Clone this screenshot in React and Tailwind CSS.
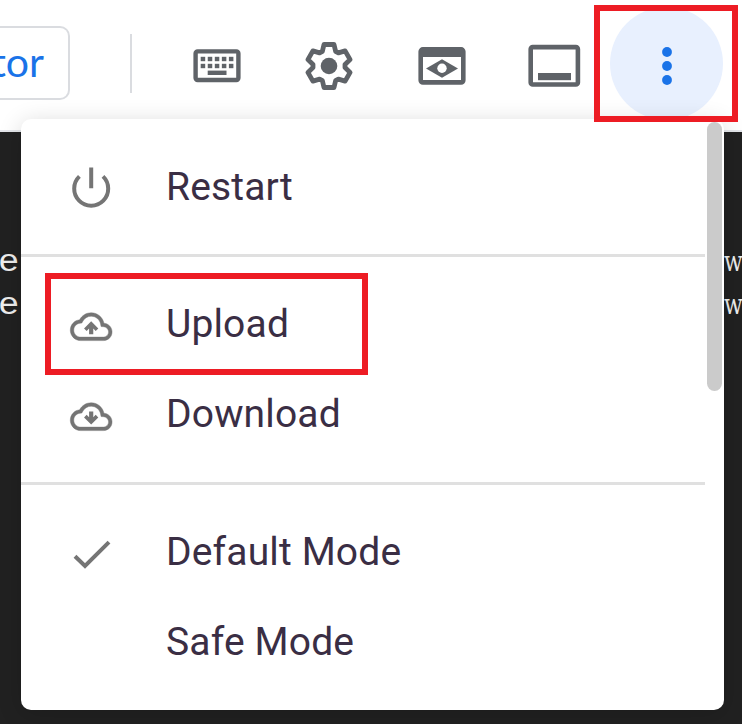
import React from "react";

const CELL = "flex h-[113px] w-[112.5px] shrink-0 items-center justify-center pt-[4px]";

function KeyboardIcon() {
  return (
    <svg width="56" height="56" viewBox="-1 0 56 56" fill="#5f6368">
      <rect x="6.6" y="13.4" width="42.8" height="28.6" rx="2" fill="none" stroke="#5f6368" strokeWidth="4.4" />
      {[0, 1, 2, 3, 4].map((i) => (
        <g key={i}>
          <rect x={11.7 + i * 7.05} y="18.8" width="4.5" height="4.4" />
          <rect x={11.7 + i * 7.05} y="25.8" width="4.5" height="4.4" />
        </g>
      ))}
      <rect x="18.7" y="32.6" width="18.8" height="4.4" />
    </svg>
  );
}

function GearIcon() {
  return (
    <svg width="56" height="56" viewBox="-28 -28 56 56">
      <polygon
        fill="none"
        stroke="#5f6368"
        strokeWidth="4.8"
        strokeLinejoin="round"
        points="-5,-21.5 5,-21.5 6.6,-14.7 9.4,-13.1 16.1,-15.1 21.1,-6.4 16,-1.6 16,1.6 21.1,6.4 16.1,15.1 9.4,13.1 6.6,14.7 5,21.5 -5,21.5 -6.6,14.7 -9.4,13.1 -16.1,15.1 -21.1,6.4 -16,1.6 -16,-1.6 -21.1,-6.4 -16.1,-15.1 -9.4,-13.1 -6.6,-14.7"
      />
      <circle r="8.3" fill="#5f6368" />
    </svg>
  );
}

function PreviewIcon() {
  return (
    <svg width="56" height="56" viewBox="-1 0 56 56">
      <rect x="6.7" y="11.4" width="42.6" height="33" rx="2.2" fill="none" stroke="#5f6368" strokeWidth="4.6" />
      <rect x="6" y="11" width="44" height="8" fill="#5f6368" />
      <path d="M12 30.5 28 21.2 44 30.5 28 39.8Z" fill="#5f6368" />
      <circle cx="28" cy="30.3" r="4.7" fill="#fff" />
    </svg>
  );
}

function PanelIcon() {
  return (
    <svg width="56" height="56" viewBox="0 0 56 56">
      <rect x="4.7" y="9.1" width="47.2" height="37.4" rx="2" fill="none" stroke="#5f6368" strokeWidth="4.6" />
      <rect x="12" y="35" width="33" height="7.2" fill="#5f6368" />
    </svg>
  );
}

function PowerIcon() {
  return (
    <svg width="48" height="48" viewBox="0 0 48 48" fill="none" stroke="#757575" strokeWidth="4">
      <path d="M24.2 4.5V25.3M12.4 13.4a17 17 0 1 0 23.6 0" />
    </svg>
  );
}

function CloudIcon({ down }) {
  return (
    <svg width="48" height="48" viewBox="0 0 48 48" className="mt-[5px]">
      <g transform="translate(3.3 2.8) scale(1.74)" fill="#757575">
        <path
          stroke="#757575"
          strokeWidth="0.25"
          d="M19.35 10.04C18.67 6.59 15.64 4 12 4 9.11 4 6.6 5.64 5.35 8.04 2.34 8.36 0 10.91 0 14c0 3.31 2.69 6 6 6h13c2.76 0 5-2.24 5-5 0-2.64-2.05-4.78-4.65-4.96zM19 18H6c-2.21 0-4-1.79-4-4 0-2.05 1.53-3.76 3.56-3.97l1.07-.11.5-.95C8.08 7.14 9.94 6 12 6c2.62 0 4.88 1.86 5.39 4.43l.3 1.5 1.53.11c1.56.1 2.78 1.41 2.78 2.96 0 1.65-1.35 3-3 3z"
        />
        <path
          transform={down ? "rotate(180 12 12.7)" : undefined}
          d="M12 8.9 16.1 13 14.6 14.5 13.2 13.1V16.4H10.8V13.1L9.4 14.5 7.9 13Z"
        />
      </g>
    </svg>
  );
}

function CheckIcon() {
  return (
    <svg width="48" height="48" viewBox="0 0 48 48" fill="none" stroke="#757575" strokeWidth="4" className="mt-[4px]">
      <path d="M8 26.2 18 36 42 12.2" />
    </svg>
  );
}

function Item({ icon, label }) {
  return (
    <div className="flex h-[90px] items-center pl-[46px]">
      <div className="flex w-[48px] justify-center">{icon}</div>
      <span className="ml-[51px] whitespace-nowrap text-[39px] leading-[46px] tracking-[0.15px] text-[#3a2e44]">{label}</span>
    </div>
  );
}

function Rule({ className }) {
  return <div className={`h-[3px] w-[684px] bg-[#e0e0e0] ${className}`} />;
}

function TerminalLine() {
  return (
    <div className="flex h-[43px] items-center justify-between text-[#eee]">
      <span className="-ml-[2px] mt-[3px] font-['Liberation_Mono',monospace] text-[31px] leading-[43px]">
        <span className="inline-block origin-left scale-x-[1.15]">e</span>
      </span>
      <span className="mt-[1px] w-[18px] font-['DejaVu_Serif',serif] text-[28px] leading-[43px]">
        <span className="inline-block origin-left scale-x-[0.78]">w</span>
      </span>
    </div>
  );
}

export default function App() {
  return (
    <div className="relative flex h-[724px] w-[742px] flex-col overflow-hidden bg-[#212121] font-['Roboto',sans-serif]">
      <header className="flex h-[132px] shrink-0 items-start border-b-2 border-[#e4e6ea] bg-white pt-[7px]">
        <div className="mt-[19px] flex h-[74px] w-[70px] shrink-0 items-center justify-end rounded-r-[10px] border-2 border-l-0 border-[#dadce0] pb-[3px] pr-[24px] font-['Lato',sans-serif] text-[41px] text-[#1a73e8]">
          tor
        </div>
        <div className="ml-[60px] mr-[28px] mt-[27px] h-[59px] w-[2px] shrink-0 bg-[#dadce0]" />
        <div className={CELL}><KeyboardIcon /></div>
        <div className={CELL}><GearIcon /></div>
        <div className={CELL}><PreviewIcon /></div>
        <div className={CELL}><PanelIcon /></div>
        <div className="flex h-[113px] w-[113px] shrink-0 items-center justify-center rounded-full bg-[#e8f0fe] pt-[5px]">
          <svg width="12" height="40" viewBox="0 0 12 40" fill="#1a73e8">
            <circle cx="6" cy="6" r="4.9" />
            <circle cx="6" cy="20" r="4.9" />
            <circle cx="6" cy="34" r="4.9" />
          </svg>
        </div>
      </header>

      <main className="grow pt-[107px]">
        <TerminalLine />
        <TerminalLine />
      </main>

      <div className="absolute left-[21px] top-[119px] h-[591px] w-[703px] rounded-[10px] bg-white pt-[23px] shadow-[0_4px_24px_rgba(0,0,0,0.16)]">
        <Item icon={<PowerIcon />} label="Restart" />
        <Rule className="mb-[22px] mt-[22px]" />
        <Item icon={<CloudIcon />} label="Upload" />
        <Item icon={<CloudIcon down />} label="Download" />
        <Rule className="mb-[22px] mt-[23px]" />
        <Item icon={<CheckIcon />} label="Default Mode" />
        <Item icon={null} label="Safe Mode" />
        <div className="absolute right-[2px] top-[3px] h-[269px] w-[15px] rounded-full bg-[#cbcbcb]" />
      </div>

      <div className="absolute left-[594px] top-[5px] h-[117px] w-[144px] border-[6px] border-[#ed1c24]" />
      <div className="absolute left-[45px] top-[273px] h-[102px] w-[323px] border-[6px] border-[#ed1c24]" />
    </div>
  );
}
